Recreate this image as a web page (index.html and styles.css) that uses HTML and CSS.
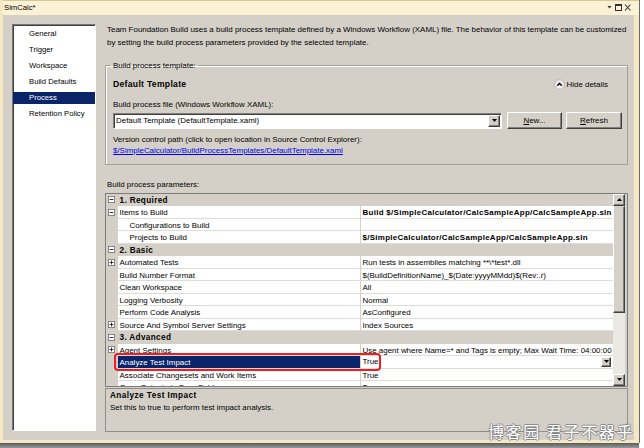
FILE: index.html
```html
<!DOCTYPE html>
<html>
<head>
<meta charset="utf-8">
<title>SimCalc*</title>
<link rel="stylesheet" href="styles.css">
</head>
<body>
<div class="screen">
  <div class="window">
    <div class="titlebar">
      <span class="title">SimCalc*</span>
      <span class="winbtns">
        <svg width="26" height="9" viewBox="0 0 26 9"><path d="M0.5 3h4l-2 2.5z" fill="#333"/><rect x="8.5" y="1.5" width="6" height="6" fill="none" stroke="#333"/><rect x="8.5" y="1.5" width="6" height="1.5" fill="#333"/><path d="M18 1.5l5.5 6M23.5 1.5 18 7.5" stroke="#333" stroke-width="1.1"/></svg>
      </span>
    </div>
    <div class="content">
      <ul class="nav">
        <li>General</li>
        <li>Trigger</li>
        <li>Workspace</li>
        <li>Build Defaults</li>
        <li class="sel">Process</li>
        <li>Retention Policy</li>
      </ul>
      <div class="main">
        <p class="intro">Team Foundation Build uses a build process template defined by a Windows Workflow (XAML) file. The behavior of this template can be customized<br>by setting the build process parameters provided by the selected template.</p>
        <fieldset class="tpl">
          <legend>Build process template:</legend>
          <div class="tpl-head">
            <b>Default Template</b>
            <span class="hide">
              <svg width="11" height="11" viewBox="0 0 11 11"><circle cx="5.5" cy="5.5" r="4.8" fill="#f2f2f2" stroke="#b4b4b4"/><path d="M3.2 6.7 5.5 4.4 7.8 6.7" fill="none" stroke="#111" stroke-width="1.5"/></svg>
              Hide details
            </span>
          </div>
          <div class="lbl first">Build process file (Windows Workflow XAML):</div>
          <div class="file-row">
            <div class="combo">
              <span class="combo-text">Default Template (DefaultTemplate.xaml)</span>
              <span class="ddbtn"><svg width="5" height="3" viewBox="0 0 5 3"><path d="M0 0h5L2.5 3z" fill="#000"/></svg></span>
            </div>
            <button class="btn"><u>N</u>ew...</button>
            <button class="btn"><u>R</u>efresh</button>
          </div>
          <div class="lbl second">Version control path (click to open location in Source Control Explorer):</div>
          <a class="link" href="#">$/SimpleCalculator/BuildProcessTemplates/DefaultTemplate.xaml</a>
        </fieldset>
        <div class="params-lbl">Build process parameters:</div>
        <div class="grid">
          <div class="rows">
            <div class="row cat"><span class="gut"><svg class="exp" width="7" height="7" viewBox="0 0 9 9"><rect x=".5" y=".5" width="8" height="8" fill="#fff" stroke="#6f6f6f"/><path d="M2 4.5h5" stroke="#000"/></svg></span><span class="name">1. Required</span><span class="val"></span></div>
            <div class="row"><span class="gut"><svg class="exp" width="7" height="7" viewBox="0 0 9 9"><rect x=".5" y=".5" width="8" height="8" fill="#fff" stroke="#6f6f6f"/><path d="M2 4.5h5" stroke="#000"/></svg></span><span class="name">Items to Build</span><span class="val bold">Build $/SimpleCalculator/CalcSampleApp/CalcSampleApp.sln</span></div>
            <div class="row"><span class="gut"></span><span class="name sub">Configurations to Build</span><span class="val"></span></div>
            <div class="row"><span class="gut"></span><span class="name sub">Projects to Build</span><span class="val bold">$/SimpleCalculator/CalcSampleApp/CalcSampleApp.sln</span></div>
            <div class="row cat"><span class="gut"><svg class="exp" width="7" height="7" viewBox="0 0 9 9"><rect x=".5" y=".5" width="8" height="8" fill="#fff" stroke="#6f6f6f"/><path d="M2 4.5h5" stroke="#000"/></svg></span><span class="name">2. Basic</span><span class="val"></span></div>
            <div class="row"><span class="gut"><svg class="exp" width="7" height="7" viewBox="0 0 9 9"><rect x=".5" y=".5" width="8" height="8" fill="#fff" stroke="#6f6f6f"/><path d="M2 4.5h5M4.5 2v5" stroke="#000"/></svg></span><span class="name">Automated Tests</span><span class="val">Run tests in assemblies matching **\*test*.dll</span></div>
            <div class="row"><span class="gut"></span><span class="name">Build Number Format</span><span class="val">$(BuildDefinitionName)_$(Date:yyyyMMdd)$(Rev:.r)</span></div>
            <div class="row"><span class="gut"></span><span class="name">Clean Workspace</span><span class="val">All</span></div>
            <div class="row"><span class="gut"></span><span class="name">Logging Verbosity</span><span class="val">Normal</span></div>
            <div class="row"><span class="gut"></span><span class="name">Perform Code Analysis</span><span class="val">AsConfigured</span></div>
            <div class="row"><span class="gut"><svg class="exp" width="7" height="7" viewBox="0 0 9 9"><rect x=".5" y=".5" width="8" height="8" fill="#fff" stroke="#6f6f6f"/><path d="M2 4.5h5M4.5 2v5" stroke="#000"/></svg></span><span class="name">Source And Symbol Server Settings</span><span class="val">Index Sources</span></div>
            <div class="row cat"><span class="gut"><svg class="exp" width="7" height="7" viewBox="0 0 9 9"><rect x=".5" y=".5" width="8" height="8" fill="#fff" stroke="#6f6f6f"/><path d="M2 4.5h5" stroke="#000"/></svg></span><span class="name">3. Advanced</span><span class="val"></span></div>
            <div class="row"><span class="gut"><svg class="exp" width="7" height="7" viewBox="0 0 9 9"><rect x=".5" y=".5" width="8" height="8" fill="#fff" stroke="#6f6f6f"/><path d="M2 4.5h5M4.5 2v5" stroke="#000"/></svg></span><span class="name">Agent Settings</span><span class="val">Use agent where Name=* and Tags is empty; Max Wait Time: 04:00:00</span></div>
            <div class="row selected"><span class="gut"></span><span class="name">Analyze Test Impact</span><span class="val">True<span class="ddbtn small"><svg width="5" height="3" viewBox="0 0 5 3"><path d="M0 0h5L2.5 3z" fill="#000"/></svg></span></span></div>
            <div class="row"><span class="gut"></span><span class="name">Associate Changesets and Work Items</span><span class="val">True</span></div>
            <div class="row"><span class="gut"></span><span class="name">Copy Outputs to Drop Folder</span><span class="val">True</span></div>
          </div>
          <div class="vscroll">
            <span class="sbtn"><svg width="5" height="3" viewBox="0 0 5 3"><path d="M0 3h5L2.5 0z" fill="#000"/></svg></span>
            <span class="thumb"></span>
            <span class="track"></span>
            <span class="sbtn"><svg width="5" height="3" viewBox="0 0 5 3"><path d="M0 0h5L2.5 3z" fill="#000"/></svg></span>
          </div>
          <div class="mark"></div>
        </div>
        <div class="desc">
          <b>Analyze Test Impact</b>
          <div>Set this to true to perform test impact analysis.</div>
        </div>
      </div>
    </div>
  </div>
  <div class="shadowbar"></div>
  <div class="watermark">博客园 君子不器乎</div>
</div>
</body>
</html>
```

FILE: styles.css
```css
* { box-sizing: border-box; }
html, body { margin: 0; padding: 0; }
body {
  background: #fff;
  font-family: "Liberation Sans", Arial, sans-serif;
  font-size: 7.95px;
  color: #000;
  width: 644px;
  height: 448px;
  overflow: hidden;
}
b { letter-spacing: 0.35px; }
.screen { position: relative; width: 644px; height: 448px; }

.window {
  width: 640px;
  height: 443px;
  background: #d4d0c8;
  border-left: 3px solid #f5e9c3;
  border-right: 1px solid #6a6a6a;
  box-shadow: inset -5px 0 0 #f5e9c3, inset 0 -3px 0 #f5e9c3;
  display: flex;
  flex-direction: column;
}
.titlebar {
  height: 15px;
  background: #fbf2d5;
  border-top: 1px solid #d8c797;
  display: flex;
  align-items: center;
  justify-content: space-between;
  padding: 0 5px 1px 1px;
}
.title { line-height: 12px; font-size: 7.7px; }
.winbtns { display: flex; padding-right: 1px; }

.content {
  flex: 1;
  display: flex;
  gap: 9px;
  padding: 9px 11px 0 9px;
}

.nav {
  list-style: none;
  margin: 0;
  padding: 3px 0 0 0;
  width: 85px;
  height: 407px;
  background: #fff;
  border: 1px solid;
  border-color: #777 #fff #fff #777;
  box-shadow: inset 1px 1px 0 #404040;
  font-size: 7.7px;
}
.nav li {
  height: 12px;
  line-height: 12px;
  margin-bottom: 4px;
  padding-left: 16px;
}
.nav li.sel { background: #0a246a; color: #fff; }

.main { flex: 1; display: flex; flex-direction: column; }
.intro { margin: 0 0 0 2px; line-height: 12.5px; white-space: nowrap; }

.tpl {
  margin: 11px 0 0 0;
  padding: 0 5px 8px 7px;
  border: 1px solid #a2a09a;
  box-shadow: inset 1px 1px 0 #fff;
  min-width: 0;
}
.tpl legend { padding: 0 2px; margin-left: -2px; line-height: 11px; }
.tpl-head {
  margin-top: 7px;
  height: 12px;
  display: flex;
  align-items: center;
  justify-content: space-between;
  padding-right: 14px;
}
.tpl-head b { font-size: 8.6px; letter-spacing: 0.3px; }
.hide { display: flex; align-items: center; gap: 2px; }
.lbl { line-height: 11px; }
.lbl.first { margin-top: 8.5px; }
.lbl.second { margin-top: 5px; }
.file-row {
  margin-top: 2.5px;
  display: flex;
  align-items: center;
  gap: 4px;
}
.combo {
  width: 389px;
  height: 16px;
  background: #fff;
  border: 1px solid;
  border-color: #808080 #fff #fff #808080;
  box-shadow: inset 1px 1px 0 #404040;
  display: flex;
  align-items: center;
  justify-content: space-between;
  padding: 0 1px 0 2px;
  margin-right: 1px;
}
.ddbtn {
  width: 12px;
  height: 12px;
  background: #d4d0c8;
  border: 1px solid;
  border-color: #fff #404040 #404040 #fff;
  box-shadow: inset -1px -1px 0 #808080;
  display: flex;
  align-items: center;
  justify-content: center;
}
.btn {
  width: 55px;
  height: 17px;
  padding: 0;
  font: inherit;
  color: #000;
  background: #d4d0c8;
  border: 1px solid;
  border-color: #fff #404040 #404040 #fff;
  box-shadow: inset -1px -1px 0 #808080;
}
.btn + .btn { width: 56px; }
.link { color: #0000ee; line-height: 11px; display: block; }

.params-lbl { margin-top: 14px; line-height: 11px; padding-left: 2px; }
.grid {
  position: relative;
  margin-top: 2.5px;
  height: 194px;
  border: 1px solid #7d7d7d;
  background: #d4d0c8;
  display: flex;
  overflow: hidden;
}
.rows { width: 507px; overflow: hidden; }
.row {
  display: grid;
  grid-template-columns: 12px 243px 252px;
  height: 12.5px;
  line-height: 13px;
}
.row .gut { background: #d4d0c8; display: flex; align-items: center; padding-left: 2px; }
.row .name, .row .val {
  background: #fff;
  border-bottom: 1px solid #dedcd6;
  white-space: nowrap;
  overflow: hidden;
}
.row .name { padding-left: 1.5px; border-right: 1px solid #d4d0c8; }
.row .name.sub { padding-left: 11.5px; }
.row .val { padding-left: 1.5px; }
.row .val.bold { font-weight: bold; letter-spacing: 0.3px; }
.row.cat .name, .row.cat .val { background: #d4d0c8; font-weight: bold; border-bottom-color: #d4d0c8; }
.row.cat .name { font-size: 8.2px; letter-spacing: 0.35px; }
.row.selected .name { background: #0a246a; color: #fff; }
.row.selected .val { display: flex; align-items: center; justify-content: space-between; padding-right: 2px; }
.ddbtn.small { width: 10px; height: 10px; }

.vscroll { width: 12px; display: flex; flex-direction: column; }
.sbtn {
  height: 12px;
  background: #d4d0c8;
  border: 1px solid;
  border-color: #fff #404040 #404040 #fff;
  box-shadow: inset -1px -1px 0 #808080;
  display: flex;
  align-items: center;
  justify-content: center;
}
.thumb {
  height: 107px;
  background: #d4d0c8;
  border: 1px solid;
  border-color: #d4d0c8 #404040 #404040 #fff;
  box-shadow: inset -1px -1px 0 #808080;
}
.track { flex: 1; background: #ebe9e4; }

.mark {
  position: absolute;
  left: 8px;
  top: 159px;
  width: 267px;
  height: 18px;
  border: 2px solid #ee1c24;
  border-radius: 4px;
}

.desc {
  margin-top: 1px;
  height: 44px;
  border: 1px solid #8e8e8e;
  padding: 1px 4px;
  line-height: 12px;
}
.desc b { display: block; font-size: 8.2px; letter-spacing: 0.45px; }

.shadowbar {
  width: 639px;
  height: 5px;
  background: linear-gradient(#5a5a5a, #9a9a9a);
}
.watermark {
  position: absolute;
  right: 10px;
  bottom: 8px;
  font-family: "Noto Sans CJK SC", sans-serif;
  font-size: 16px;
  line-height: 17px;
  color: #fff;
  text-shadow: 1px 0 0 #8a8a8a, -1px 0 0 #8a8a8a, 0 1px 0 #8a8a8a, 0 -1px 0 #8a8a8a;
  letter-spacing: 1.6px;
}
```
